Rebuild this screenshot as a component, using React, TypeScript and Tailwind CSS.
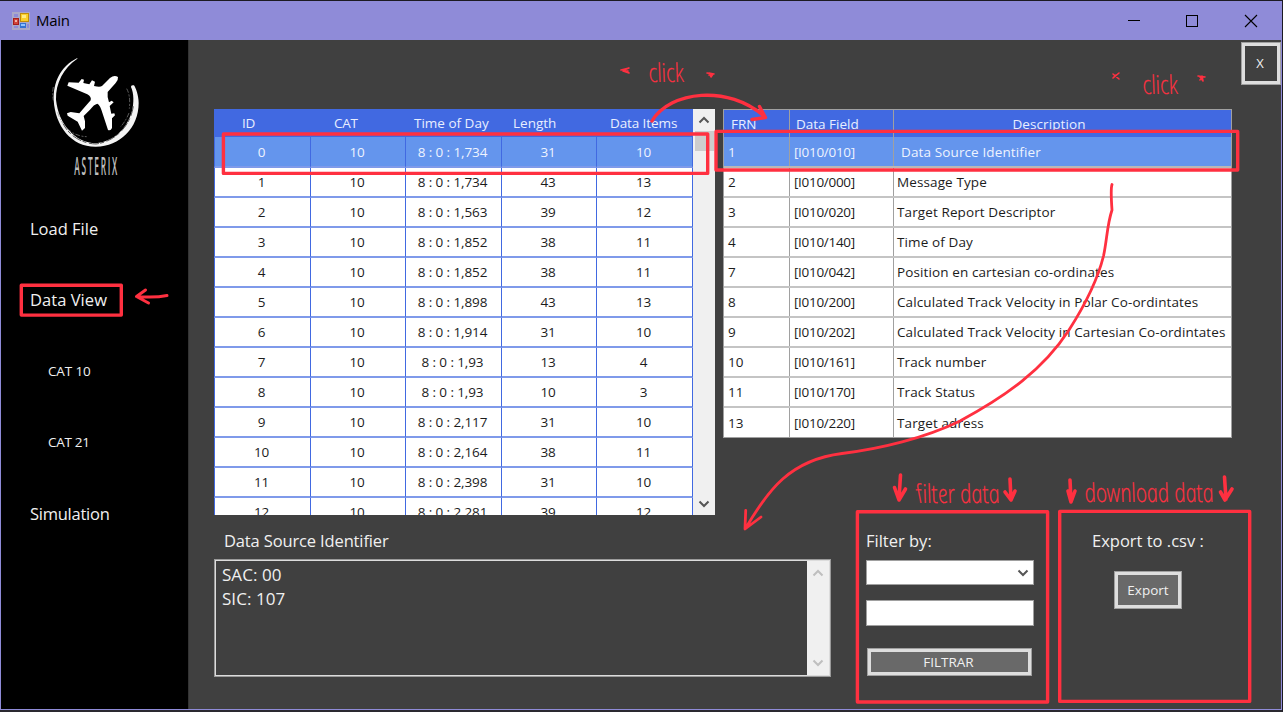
import type { ReactNode } from "react";

const rows = [
  ["0", "10", "8 : 0 : 1,734", "31", "10"],
  ["1", "10", "8 : 0 : 1,734", "43", "13"],
  ["2", "10", "8 : 0 : 1,563", "39", "12"],
  ["3", "10", "8 : 0 : 1,852", "38", "11"],
  ["4", "10", "8 : 0 : 1,852", "38", "11"],
  ["5", "10", "8 : 0 : 1,898", "43", "13"],
  ["6", "10", "8 : 0 : 1,914", "31", "10"],
  ["7", "10", "8 : 0 : 1,93", "13", "4"],
  ["8", "10", "8 : 0 : 1,93", "10", "3"],
  ["9", "10", "8 : 0 : 2,117", "31", "10"],
  ["10", "10", "8 : 0 : 2,164", "38", "11"],
  ["11", "10", "8 : 0 : 2,398", "31", "10"],
  ["12", "10", "8 : 0 : 2,281", "39", "12"],
];

const fields = [
  ["1", "[I010/010]", "Data Source Identifier"],
  ["2", "[I010/000]", "Message Type"],
  ["3", "[I010/020]", "Target Report Descriptor"],
  ["4", "[I010/140]", "Time of Day"],
  ["7", "[I010/042]", "Position en cartesian co-ordinates"],
  ["8", "[I010/200]", "Calculated Track Velocity in Polar Co-ordintates"],
  ["9", "[I010/202]", "Calculated Track Velocity in Cartesian Co-ordintates"],
  ["10", "[I010/161]", "Track number"],
  ["11", "[I010/170]", "Track Status"],
  ["13", "[I010/220]", "Target adress"],
];

function Chevron({ up, className }: { up?: boolean; className: string }) {
  return (
    <svg viewBox="0 0 12 8" className={className} fill="none" stroke="currentColor" strokeWidth="2">
      <path d={up ? "M1.5 6.5 6 2l4.5 4.5" : "M1.5 1.5 6 6l4.5-4.5"} />
    </svg>
  );
}

function TitleBar() {
  return (
    <header className="flex h-10 shrink-0 items-center border-t border-[#1c1a22] bg-[#8f8bd8] pl-3">
      <svg viewBox="0 0 18 18" className="size-[18px]">
        <rect x="0" y="0" width="18" height="18" fill="#aaa8c9" />
        <rect x="2" y="2" width="4" height="3" fill="#8f8bd8" />
        <rect x="8" y="1" width="9" height="9" fill="#c18d0c" />
        <rect x="9" y="2" width="7" height="7" fill="#fbd02b" />
        <rect x="10" y="3" width="4" height="3" fill="#ffeb86" />
        <rect x="1" y="6" width="6" height="7" fill="#a51d1d" />
        <rect x="2" y="7" width="4" height="5" fill="#d0453b" />
        <rect x="3" y="8" width="2" height="2" fill="#f4b1a5" />
        <rect x="8" y="11" width="6" height="5" fill="#3573d3" />
        <rect x="9" y="12" width="4" height="2" fill="#8fc2ff" />
        <rect x="2" y="14" width="4" height="2" fill="#8f8bd8" />
        <rect x="15" y="12" width="2" height="4" fill="#8f8bd8" />
      </svg>
      <span className="ml-1.5 text-[15px] tracking-[-0.3px] text-black">Main</span>
      <svg viewBox="0 0 132 14" className="ml-auto mr-6 h-[14px] w-[132px]" fill="none" stroke="#000" shapeRendering="crispEdges">
        <path d="M2 6.5h12" />
        <rect x="60.5" y="1.5" width="11" height="11" />
        <path d="m119 1 12 12M131 1l-12 12" shapeRendering="auto" strokeWidth="1.1" />
      </svg>
    </header>
  );
}

function Logo() {
  return (
    <svg viewBox="150 160 280 380" className="ml-[49px] h-[126.67px] w-[93.33px] overflow-visible">
      <path
        fill="#f4f4f4"
        d="M232 175C180 200 160 250 161 300C165 380 215 442 288 441C360 440 416 385 416 310C416 290 408 265 402 257Q392 255 393 262C402 280 402 310 396 335C380 390 340 426 288 431C225 428 176 375 168 300C167 250 190 205 232 177Z"
      />
      <path fill="none" stroke="#8a8a8a" strokeWidth="2" d="M380 267q12 20 8 60M160 262q-4 20 0 40M173 338c12 42 44 72 87 73M387 340q-10 25-26 42" strokeDasharray="14 5 6 4" />
      <path fill="none" stroke="#555" strokeWidth="3" d="M400 320c-9 60-55 106-112 113-42-1-80-24-98-60" strokeDasharray="30 8 12 4" />
      <path
        fill="#fff"
        d="M330 235Q343 224 354 232Q355 243 347 250L323 277Q321 290 327 308L335 303 341 308 329 319 334 342 343 341 345 347 336 356 336 385Q332 395 324 391L309 345Q300 314 292 312Q282 314 270 330L251 349 255 365 255 385 246 393 233 366 203 348 201 341 212 337 238 341 272 302Q275 291 262 284L202 258 206 248 236 249 245 238 252 240 250 250 268 254 276 242 285 246 282 259Q300 263 306 259Z"
      />
      <text x="223" y="527" textLength="134" lengthAdjust="spacingAndGlyphs" fontSize="78" letterSpacing="16" fontWeight="600" fill="#bdbdbd" className="font-['Open_Sans',sans-serif]">
        ASTERIX
      </text>
    </svg>
  );
}

function Sidebar() {
  return (
    <nav className="flex w-[188px] shrink-0 flex-col border-r border-[#333] bg-black pt-[13px] text-[#f0f0f0]">
      <Logo />
      <ul className="mt-[13px] text-[16.5px] leading-[71.3px]">
        <li className="h-[71.3px] pl-[29px]">Load File</li>
        <li className="h-[71.3px] pl-[29px] tracking-[0.05px]">Data View</li>
        <li className="h-[71.3px] pl-[47px] pt-px text-[13.5px] tracking-[-0.15px]">CAT 10</li>
        <li className="h-[71.3px] pl-[47px] text-[13.5px] tracking-[-0.3px]">CAT 21</li>
        <li className="h-[71.3px] pl-[29px] tracking-[-0.25px]">Simulation</li>
      </ul>
    </nav>
  );
}

function ScrollBar({ children }: { children?: ReactNode }) {
  return <div className="flex h-full w-[22px] shrink-0 flex-col items-center bg-[#f0f0f0]">{children}</div>;
}

function RecordTable() {
  return (
    <div className="flex h-[406px] w-[501px] overflow-hidden">
      <div className="w-[479px] shrink-0 bg-white text-[13.5px] font-medium">
        <div className="grid h-7 grid-cols-[97px_95px_96px_95px_96px] items-center bg-[#4169e1] pt-px text-[#e8eeff]">
          <span className="pl-[28px] tracking-[-0.2px]">ID</span>
          <span className="pl-[23px] tracking-[-0.3px]">CAT</span>
          <span className="pl-[8px]">Time of Day</span>
          <span className="pl-[11px]">Length</span>
          <span className="pl-[13px] tracking-[-0.1px]">Data Items</span>
        </div>
        {rows.map((r, i) => (
          <div
            key={r[0]}
            className={
              i === 0
                ? "grid h-[31px] grid-cols-[97px_95px_96px_95px_96px] bg-[#6495ed] text-[#eef3ff]"
                : "grid h-[30px] grid-cols-[97px_95px_96px_95px_96px] text-[#1c1c1c]"
            }
          >
            {r.map((c, j) => (
              <span
                key={j}
                className="flex items-center justify-center whitespace-pre border-r border-b-2 border-r-[#4169e1] border-b-[#7f9aea] pr-0.5 pt-px tracking-[-0.1px] first:border-l first:border-l-[#4169e1]"
              >
                {c}
              </span>
            ))}
          </div>
        ))}
      </div>
      <ScrollBar>
        <Chevron up className="mt-[7px] h-2 w-3 text-[#555]" />
        <div className="mt-[7px] h-5 w-[19px] bg-[#cdcdcd]" />
        <Chevron className="mt-auto mb-[7px] h-2 w-3 text-[#555]" />
      </ScrollBar>
    </div>
  );
}

function FieldTable() {
  return (
    <div className="w-[509px] border border-[#a0a0a0] bg-white text-[13.5px] font-medium">
      <div className="grid h-[27px] grid-cols-[66px_104px_337px] bg-[#4169e1] text-[#e8eeff]">
        <span className="flex items-center border-r border-[#a0a0a0] pl-[7px] pt-px">FRN</span>
        <span className="flex items-center border-r border-[#a0a0a0] pl-[6px] pt-px">Data Field</span>
        <span className="flex items-center justify-center pr-[27px] pt-px tracking-[0.1px]">Description</span>
      </div>
      {fields.map((f, i) => (
        <div
          key={f[0]}
          className={
            i === 0
              ? "grid h-[31px] grid-cols-[66px_104px_337px] border-b-2 border-[#b8b8b8] bg-[#6495ed] text-[#eef3ff]"
              : "grid h-[30px] grid-cols-[66px_104px_337px] border-b-2 border-[#c4c4c4] text-[#1c1c1c] last:h-[29px] last:border-b-0"
          }
        >
          <span className="flex items-center border-r border-[#a0a0a0] pl-1 pt-px">{f[0]}</span>
          <span className="flex items-center border-r border-[#a0a0a0] pl-1 pt-px tracking-[-0.3px]">{f[1]}</span>
          <span
            className={
              i === 0
                ? "flex items-center whitespace-nowrap pl-[7px] pt-px tracking-[0.12px]"
                : "flex items-center whitespace-nowrap pl-[3px] pt-px tracking-[0.11px]"
            }
          >
            {f[2]}
          </span>
        </div>
      ))}
    </div>
  );
}

function DetailPane() {
  return (
    <section className="w-[617px] text-[16.5px] text-[#f0f0f0]">
      <h2 className="h-8 pl-[10px] leading-7 tracking-[-0.14px]">Data Source Identifier</h2>
      <div className="flex h-[118px] justify-between border-2 border-[#dcdcdc] outline-1 -outline-offset-1 outline-[#9a9a9a]">
        <p className="pl-[6px] pt-0.5 text-[17px] leading-6 tracking-[0.05px]">
          SAC: 00
          <br />
          SIC: 107
        </p>
        <ScrollBar>
          <Chevron up className="mt-2 h-2 w-3 text-[#bfbfbf]" />
          <Chevron className="mt-auto mb-2 h-2 w-3 text-[#bfbfbf]" />
        </ScrollBar>
      </div>
    </section>
  );
}

function FilterPane() {
  return (
    <section className="ml-[35px] w-[168px] text-[#f0f0f0]">
      <h2 className="h-[33px] text-[16.5px] leading-7">Filter by:</h2>
      <div className="flex h-[25px] items-center justify-end border border-[#a0a0a0] bg-white pr-1">
        <Chevron className="h-2 w-3 text-[#555]" />
      </div>
      <div className="mt-[15px] h-[26px] border border-[#a0a0a0] bg-white" />
      <button className="ml-px mt-[22px] block h-7 w-[165px] border-4 border-[#dedede] bg-[#696969] pr-0.5 text-[13.5px] leading-[18px] outline-1 -outline-offset-1 outline-[#a0a0a0]">
        FILTRAR
      </button>
    </section>
  );
}

function ExportPane() {
  return (
    <section className="ml-[58px] w-[130px] text-[#f0f0f0]">
      <h2 className="h-11 whitespace-nowrap text-[16.5px] leading-7">Export to .csv :</h2>
      <button className="ml-[22px] h-[38px] w-[68px] border-4 border-[#dedede] bg-[#696969] text-[13.5px] outline-1 -outline-offset-1 outline-[#a0a0a0]">
        Export
      </button>
    </section>
  );
}

function Annotations() {
  return (
    <svg
      viewBox="0 0 1283 712"
      className="pointer-events-none absolute left-0 top-0 h-[712px] w-[1283px] font-['Open_Sans',sans-serif]"
      fill="none"
      stroke="#ff3040"
      strokeWidth="3.4"
      strokeLinecap="round"
      strokeLinejoin="round"
    >
      <rect x="21.3" y="285.3" width="100" height="29.8" />
      <rect x="223.4" y="134" width="484.3" height="39.4" />
      <rect x="716" y="131.4" width="521.7" height="38.6" />
      <rect x="857.4" y="511.7" width="190.2" height="190.3" />
      <rect x="1059.7" y="511.4" width="190" height="190" />
      <path d="M652 121C670 91 728 84 765 117M759.5 106.5 765.5 117.5 752 119.5" />
      <path
        strokeWidth="2.8"
        d="M1112 184.500Q1110.500 189 1112 210C1107 225 1107 240 1103.500 256C1098 278 1085 305 1069 330C1043 370 1006 396 960 421C925 438 880 449 842 453.500C790 460 768 490 745.500 528.500M745.700 510.500 745 529 761 517"
      />
      <path strokeWidth="3" d="M167 295.500Q155 298 137 296.500M145.500 290 136.500 296.500 148.500 303" />
      <g strokeWidth="3.6">
        <path d="M900.500 475 899 499M894.500 487.500 899 500 905.500 489" />
        <path d="M1010 479 1011 499M1005 492 1011 500 1015 491" />
        <path d="M1070 480 1071 501M1068 491 1071 502 1075 491" />
        <path d="M1224.500 477 1226 499M1220.500 492 1225 500 1232 489" />
      </g>
      <g strokeWidth="1.6">
        <path d="m621 70 8-2-5 2 5 3-6-2 5 0" />
        <path d="m707 73 7 1-5-1 2 4 2-3-4 1" />
        <path d="m1113 74 6 5m0-6-6 5 3-3" />
        <path d="m1198 76 7 1-5 0 3 4-1-5-2 4" />
      </g>
      <g fill="#ff3040" stroke="#ff3040" strokeWidth="0.25" fontWeight="300" fontStyle="italic" fontSize="26">
        <text transform="translate(650 82) skewX(11)" textLength="35" lengthAdjust="spacingAndGlyphs">click</text>
        <text transform="translate(1144 94) skewX(11)" textLength="35" lengthAdjust="spacingAndGlyphs">click</text>
        <text transform="translate(918 503) skewX(11)" textLength="83" lengthAdjust="spacingAndGlyphs">
          <tspan fontStyle="normal">f</tspan>ilter data
        </text>
        <text transform="translate(1086 502) skewX(11)" textLength="129" lengthAdjust="spacingAndGlyphs">download data</text>
      </g>
    </svg>
  );
}

export default function App() {
  return (
    <div className="relative flex h-[712px] w-[1283px] flex-col overflow-hidden border-b-2 border-r border-b-[#2a2930] border-r-[#1c1a22] bg-[#404040] font-['Open_Sans','Noto_Sans',sans-serif]">
      <TitleBar />
      <div className="flex min-h-0 flex-1 border-x border-b border-[#8f8bd8]">
        <Sidebar />
        <main className="min-w-0 flex-1">
          <div className="flex h-[69px] justify-end pt-0.5">
            <button className="h-[43px] w-10 border-4 border-[#dedede] pr-0.5 text-[13px] text-[#f0f0f0] outline-1 -outline-offset-1 outline-[#a0a0a0]">
              X
            </button>
          </div>
          <div className="flex items-start gap-2 pl-[25px]">
            <RecordTable />
            <FieldTable />
          </div>
          <div className="flex items-start pl-[25px] pt-3">
            <DetailPane />
            <FilterPane />
            <ExportPane />
          </div>
        </main>
      </div>
      <Annotations />
    </div>
  );
}
